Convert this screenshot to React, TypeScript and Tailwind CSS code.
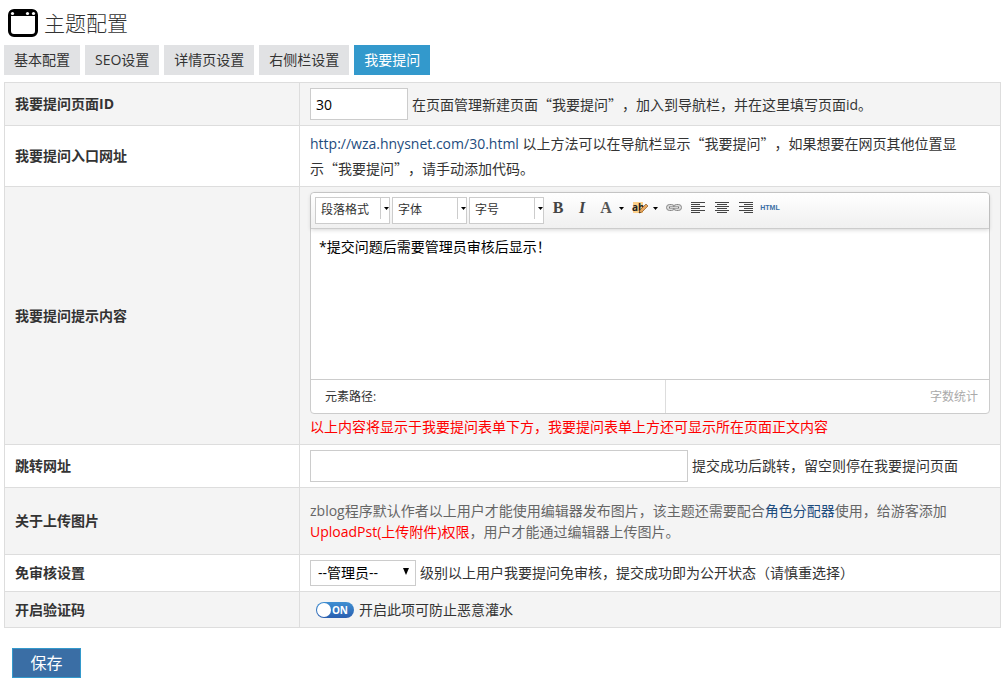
import { useState } from 'react'
import type { ReactNode } from 'react'

const TABS = ['基本配置', 'SEO设置', '详情页设置', '右侧栏设置', '我要提问']

const TOOLBAR_SELECTS = ['段落格式', '字体', '字号']

const USER_LEVELS = ['--管理员--', '--网站编辑--', '--作者--', '--协作者--', '--评论者--', '--游客--']

export default function App() {
  const [tab, setTab] = useState('我要提问')
  const [captcha, setCaptcha] = useState(true)

  return (
    <main
      lang="zh-CN"
      className="px-1 pb-2 text-sm text-[#333] [text-spacing-trim:space-all] font-['Open_Sans','Noto_Sans_CJK_SC',sans-serif]"
    >
      <header className="flex h-[45px] items-center gap-1.5 pl-1">
        <WindowIcon />
        <h1 className="text-[21px] leading-7 font-light">主题配置</h1>
      </header>

      {/* Tabs */}
      <nav className="flex flex-wrap gap-[5px]">
        {TABS.map((t) => (
          <a
            key={t}
            href="#"
            onClick={(e) => {
              e.preventDefault()
              setTab(t)
            }}
            className={
              t === tab
                ? 'bg-[#3399cc] px-2.5 leading-[30px] text-white'
                : 'bg-[#e1e2e4] px-2.5 leading-[30px]'
            }
          >
            {t}
          </a>
        ))}
      </nav>

      <form onSubmit={(e) => e.preventDefault()}>
        <table className="mt-[7px] w-full table-fixed border-collapse">
          <colgroup>
            <col className="w-[295px]" />
            <col />
          </colgroup>
          <tbody>
            <Row id="page-id" label="我要提问页面ID">
              <div className="flex items-center gap-1">
                <input
                  id="page-id"
                  defaultValue="30"
                  className="h-8 w-[98px] border border-[#ccc] bg-white px-[5px] text-black"
                />
                <span>
                  在页面管理新建页面<Quoted>我要提问</Quoted>，加入到导航栏，并在这里填写页面id。
                </span>
              </div>
            </Row>

            <Row label="我要提问入口网址">
              <p className="leading-[25px]">
                <a href="#" className="text-[#1d4c7d]">
                  http://wza.hnysnet.com/30.html
                </a>{' '}
                以上方法可以在导航栏显示<Quoted>我要提问</Quoted>，如果想要在网页其他位置显
                <span className="whitespace-nowrap">
                  示<Quoted>我要提问</Quoted>
                </span>
                ，请手动添加代码。
              </p>
            </Row>

            <Row id="tips" label="我要提问提示内容">
              <Editor />
              <p className="leading-[25px] text-[#f00]">
                以上内容将显示于我要提问表单下方，我要提问表单上方还可显示所在页面正文内容
              </p>
            </Row>

            <Row id="jump" label="跳转网址">
              <div className="flex items-center gap-1">
                <input
                  id="jump"
                  className="h-8 w-[378px] border border-[#ccc] bg-white px-[5px] text-black"
                />
                <span>提交成功后跳转，留空则停在我要提问页面</span>
              </div>
            </Row>

            <Row label="关于上传图片">
              <p className="py-[7px] leading-[21px] text-[#666]">
                zblog程序默认作者以上用户才能使用编辑器发布图片，该主题还需要配合
                <a href="#" className="text-[#1d4c7d]">
                  角色分配器
                </a>
                使用，给游客添加<span className="text-[#f00]">UploadPst(上传附件)权限</span>
                ，用户才能通过编辑器上传图片。
              </p>
            </Row>

            <Row id="level" label="免审核设置">
              <div className="flex items-center gap-1">
                <div className="relative">
                  <select
                    id="level"
                    className="block h-[26px] w-[106px] appearance-none border border-[#ccc] bg-white pl-[7px] text-black"
                  >
                    {USER_LEVELS.map((l) => (
                      <option key={l}>{l}</option>
                    ))}
                  </select>
                  <svg
                    viewBox="0 0 8 7"
                    className="pointer-events-none absolute top-2 right-1.5 h-[7px] w-2"
                  >
                    <path d="M1 0h6L4 7z" />
                  </svg>
                </div>
                <span>级别以上用户我要提问免审核，提交成功即为公开状态（请慎重选择）</span>
              </div>
            </Row>

            <Row id="captcha" label="开启验证码">
              <div className="flex h-[25px] items-center gap-[5px] pl-1.5">
                <div className="relative h-4 w-[38px]">
                  <input
                    id="captcha"
                    type="checkbox"
                    checked={captcha}
                    onChange={(e) => setCaptcha(e.target.checked)}
                    className="block h-4 w-[38px] appearance-none rounded-full bg-[#aaa] checked:bg-linear-to-b checked:from-[#3f8fd2] checked:to-[#2a5fb0]"
                  />
                  <span
                    className={
                      captcha
                        ? 'pointer-events-none absolute top-px left-px size-3.5 rounded-full bg-white'
                        : 'pointer-events-none absolute top-px right-px size-3.5 rounded-full bg-white'
                    }
                  />
                  {captcha && (
                    <span className="pointer-events-none absolute top-0 right-1.5 text-[10px] leading-4 font-bold text-white">
                      ON
                    </span>
                  )}
                </div>
                <span>开启此项可防止恶意灌水</span>
              </div>
            </Row>
          </tbody>
        </table>

        <button
          type="submit"
          className="mt-5 ml-2 h-[30px] w-[69px] border border-[#3399cc] bg-[#3a6ea5] text-base leading-7 text-white"
        >
          保存
        </button>
      </form>
    </main>
  )
}

function Row({ id, label, children }: { id?: string; label: string; children: ReactNode }) {
  return (
    <tr className="odd:bg-[#f4f4f4]">
      <th scope="row" className="border border-[#ddd] px-2.5 text-left font-bold">
        {id ? <label htmlFor={id}>{label}</label> : label}
      </th>
      <td className="border border-[#ddd] px-2.5 py-[5px]">{children}</td>
    </tr>
  )
}

/* full-width quotes, the latin font has narrow ones */
function Quoted({ children }: { children: ReactNode }) {
  return <span className="font-['Noto_Sans_CJK_SC',sans-serif]">“{children}”</span>
}

function Editor() {
  return (
    <div className="rounded border border-[#ccc] bg-white">
      <div className="flex h-9 flex-wrap items-start gap-1 rounded-t border-b border-[#ccc] bg-linear-to-b from-white to-[#f0f0f0] px-1 pt-1 shadow-[0_1px_4px_rgba(0,0,0,0.17)]">
        <div className="flex gap-0.5">
          {TOOLBAR_SELECTS.map((s) => (
            <div key={s} className="relative">
              <select
                aria-label={s}
                className="block h-[27px] w-[75px] appearance-none border border-[#ccc] bg-white pb-0.5 pl-[5px] text-xs"
              >
                <option>{s}</option>
              </select>
              <span className="pointer-events-none absolute top-px right-px flex h-[21px] w-[9px] items-center justify-end border-l border-[#ccc]">
                <Caret />
              </span>
            </div>
          ))}
        </div>
        <Tool label="加粗">
          <span className="font-['Liberation_Serif',serif] text-base font-bold text-[#444]">B</span>
        </Tool>
        <Tool label="斜体">
          <span className="font-['Liberation_Serif',serif] text-base font-bold text-[#444] italic">I</span>
        </Tool>
        <Tool label="字体颜色" menu>
          <span className="font-['Liberation_Serif',serif] text-base font-bold text-[#555]">A</span>
        </Tool>
        <Tool label="背景色" menu>
          <HighlightIcon />
        </Tool>
        <Tool label="超链接">
          <LinkIcon />
        </Tool>
        <Tool label="居左对齐">
          <AlignIcon d="M3 4.5h14M3 6.5h9M3 8.5h14M3 10.5h9M3 12.5h14M3 14.5h9" />
        </Tool>
        <Tool label="居中对齐">
          <AlignIcon d="M3 4.5h14M5 6.5h10M3 8.5h14M5 10.5h10M3 12.5h14M5 14.5h10" />
        </Tool>
        <Tool label="居右对齐">
          <AlignIcon d="M3 4.5h14M8 6.5h9M3 8.5h14M8 10.5h9M3 12.5h14M8 14.5h9" />
        </Tool>
        <Tool label="源代码">
          <span className="font-['Liberation_Sans',sans-serif] text-[7px] font-bold text-[#3a6ea5]">HTML</span>
        </Tool>
      </div>
      <textarea
        id="tips"
        defaultValue="*提交问题后需要管理员审核后显示！"
        className="block h-[150px] w-full resize-none bg-transparent px-2 pt-2 leading-5 text-black outline-none"
      />
      <div className="flex h-[34px] items-center border-t border-[#ccc] text-xs">
        <div className="h-full w-[355px] border-r border-[#ddd] pl-3.5 leading-[33px]">元素路径:</div>
        <div className="flex-1 pr-[11px] text-right text-[#aaa]">字数统计</div>
      </div>
    </div>
  )
}

function Tool({ label, menu, children }: { label: string; menu?: boolean; children: ReactNode }) {
  return (
    <button type="button" aria-label={label} className="flex h-[22px] items-center">
      <span className="flex w-5 justify-center">{children}</span>
      {menu && (
        <span className="flex w-2.5 justify-center">
          <Caret />
        </span>
      )}
    </button>
  )
}

function Caret() {
  return (
    <svg viewBox="0 0 5 3" className="h-[3px] w-[5px]">
      <path d="M0 0h5L2.5 3z" />
    </svg>
  )
}

function AlignIcon({ d }: { d: string }) {
  return (
    <svg viewBox="0 0 20 20" className="size-5" fill="none" stroke="#444">
      <path d={d} />
    </svg>
  )
}

function LinkIcon() {
  return (
    <svg viewBox="0 0 20 20" className="size-5" fill="none" stroke="#888">
      <rect x="2.5" y="6.5" width="8" height="6" rx="3" fill="#ddd" />
      <rect x="9.5" y="6.5" width="8" height="6" rx="3" fill="#ddd" />
      <path d="M5 9.5h10" stroke="#777" strokeWidth="2" />
      <path d="M6 9.5h8" stroke="#eee" strokeWidth=".8" />
    </svg>
  )
}

function HighlightIcon() {
  return (
    <svg viewBox="0 0 20 20" className="size-5">
      <path d="M3 4h10v11H3z" fill="#fdd08a" />
      <text x="2" y="13" fontSize="10" fontWeight="bold" fontFamily="Open Sans" fill="#222">
        ab
      </text>
      <path d="M9 15l1-3 6-6 2 2-6 6z" fill="#e9a75c" stroke="#8a5a2b" strokeWidth=".7" />
      <path d="M9 15l.6-1.8 1.2 1.2z" fill="#222" />
    </svg>
  )
}

function WindowIcon() {
  return (
    <svg viewBox="0 0 30 28" className="h-7 w-[30px]">
      <rect x="1.5" y="1.5" width="27" height="25" rx="4.5" fill="#fff" stroke="#000" strokeWidth="3" />
      <path d="M1 7V5a4 4 0 0 1 4-4h20a4 4 0 0 1 4 4v2z" />
      <circle cx="4.5" cy="4.5" r="1.6" fill="#fff" />
      <circle cx="19.5" cy="4.5" r="1.6" fill="#fff" />
      <circle cx="25.5" cy="4.5" r="1.6" fill="#fff" />
    </svg>
  )
}
